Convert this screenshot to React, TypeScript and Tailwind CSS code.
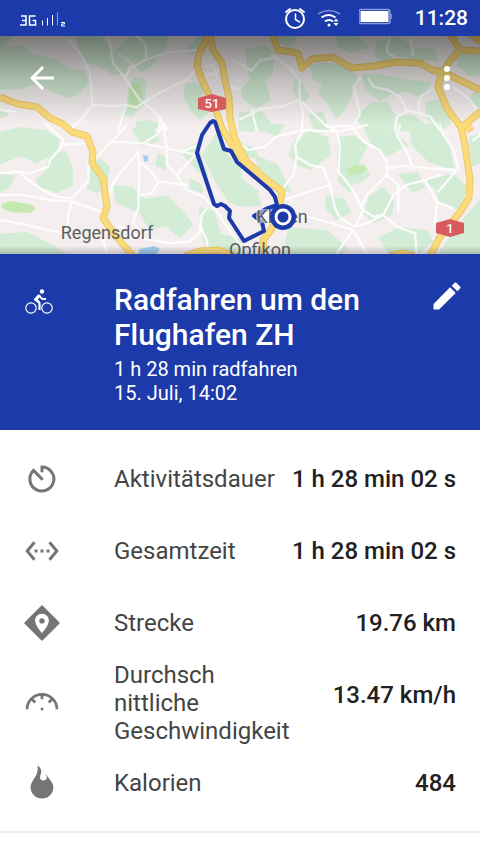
import type { ReactNode } from "react";

type Stat = {
    label: string;
    value: string;
    icon: ReactNode;
}

// the map is cut in four tiles, each 720 x 390 units drawn at a third of that size
type Tile = {
    place: string;
    woods: string;
    streets: string;
}

const tiles: Tile[] = [
    {
        place: "translate(0 0) scale(0.33333)",
        woods: "M0 145L70 140 90 165 165 180 200 205 250 215 265 245 235 280 205 290 150 268 100 250 60 264 0 265zM230 108L300 108 330 150 385 190 372 218 340 222 300 195 262 185 240 150zM400 108L500 108 495 140 450 200 425 212 385 170 350 150zM405 235L435 240 430 310 395 345 370 340 385 300 390 260zM560 255L610 250 600 300 620 340 600 355 575 330 555 290zM440 365L480 372 450 390 410 385 412 368zM0 330L20 345 0 350zM600 108L625 108 600 130 580 160 560 150zM0 108L30 108 10 140 0 140z",
        streets: "M205 118L245 165 270 220 278 315 245 355 210 390M278 315L340 318 378 315 410 322 450 295 500 268 560 240 590 205M378 315L355 390M325 108L340 190 375 235 420 300 480 350 500 390M375 235L390 205 440 178 500 158 590 150M440 178L435 130 410 108M620 225L655 215M615 200L640 195 650 230M700 185L720 190M0 330L45 335M480 350L478 390M690 260L720 270",
    },
    {
        place: "translate(240 0) scale(0.33333)",
        woods: "M20 150L75 140 100 160 95 220 70 240 90 300 50 320 15 300 5 270 35 240 25 200zM290 108L350 108 380 140 330 155 295 138zM410 130L470 110 520 145 580 150 590 180 540 175 470 165 430 185 410 165zM215 200L250 190 320 200 350 230 330 290 310 330 290 350 265 310 240 280 250 250 220 235zM370 225L430 230 490 240 570 250 540 290 500 270 450 280 420 300 380 265zM170 230L205 290 190 305 160 270zM0 340L60 335 90 370 70 390 0 390zM400 310L440 310 460 345 520 350 570 390 380 390 350 350zM655 165L720 165 720 220 690 225 655 195zM560 310L600 300 630 370 600 390 560 350zM700 280L720 270 720 320 690 300zM210 345L245 340 265 385 225 390zM110 108L170 108 150 140 130 130z",
        streets: "M0 190L35 212 60 180 100 175 95 165 150 205 178 240 180 300 130 318 60 328 0 358M180 300L190 345 185 390M180 300L220 340 260 380 290 390M260 380L340 378 360 340 350 300 340 260 360 235M385 235L400 260 445 270 480 290 500 330 540 340 570 350 600 390M535 335L540 290 590 260M450 108L440 155 470 175M510 108L520 165M500 335L470 350 465 390M640 260L690 300 720 345M35 330L50 390",
    },
    {
        place: "translate(0 125) scale(0.33333)",
        woods: "M0 25L60 10 140 20 175 45 170 75 110 110 60 90 0 115zM150 95L195 80 215 130 215 180 170 200 125 185 110 165 140 140zM280 115L300 105 325 125 320 185 290 200 265 190 268 150zM345 185L395 190 430 225 500 215 545 260 575 300 540 335 500 300 450 310 420 260 350 230zM0 330L80 325 150 360 190 385 0 385zM400 15L450 0 475 45 430 60zM545 80L590 60 620 150 600 140 570 110zM610 90L650 30 680 90 720 130 720 240 690 230 650 170zM475 90L500 100 495 130 470 120zM0 150L40 155 30 180 0 200zM570 165L600 180 605 200 575 190zM600 250L640 260 660 330 720 345 720 385 620 385z",
        streets: "M140 0L190 45 185 65 150 105 145 125 90 145 60 140 0 145M185 60L250 55M60 145L120 190 170 215 215 220 265 170 265 120M0 210L70 210 150 225 215 230 260 245 320 265M215 230L205 270 200 310M0 285L80 300 190 325M290 95L335 50 380 0M335 50L430 55 500 70 545 80 585 65M430 55L470 30 490 0 500 70 500 120 530 150 560 195 610 215 650 260 720 360M415 80L345 165 325 210M415 80L418 120 415 250 400 290 430 340 510 355 570 350 600 320 605 270 620 250M418 110L455 140 475 170 560 180M475 170L455 205 420 210M600 300L620 345 625 385M545 80L590 90M350 300L430 340M310 345L320 385M530 150L585 90",
    },
    {
        place: "translate(240 125) scale(0.33333)",
        woods: "M0 55L45 75 60 150 70 165 130 190 150 200 110 120 60 100 0 85zM165 50L210 20 260 40 270 90 210 130 180 120 150 90zM300 40L340 35 380 60 350 120 330 200 300 170 295 100zM70 0L130 0 110 30 75 15zM380 20L460 25 500 60 440 90 400 60zM510 0L580 0 620 50 640 130 570 110 520 60zM390 215L430 190 460 230 450 270 400 290 375 265zM560 170L640 150 680 190 650 250 600 230 590 190zM330 120L370 120 385 150 350 175zM480 150L530 145 550 185 520 200zM480 310L560 320 575 350 530 385 450 385 420 340zM150 310L260 320 320 370 300 385 130 385zM260 215L310 225 330 260 290 280 262 250zM650 310L720 230 720 385 600 385zM690 40L720 30 720 110 700 120zM0 160L50 200 60 240 0 240z",
        streets: "M0 55L25 75 75 65 110 35 190 15 290 20 340 10 380 0M190 15L165 60 170 95 160 150 125 195 115 230M170 95L210 120 250 130 270 180 285 250 300 280 345 305M115 230L190 205 270 180M260 0L290 20 300 60 295 140 335 190 370 255 345 305M340 10L370 50 420 75 440 110 440 150 380 210 360 250M480 0L470 30 500 80 520 130M440 130L490 122 570 130 650 135M600 0L610 30 640 70 655 130M555 165L500 180 460 210 430 270 380 295 345 305M440 150L475 180 475 260M370 255L400 275 430 270 470 305 525 325 530 385M555 165L590 230 640 250M590 230L585 300M160 265L260 290 340 315 380 385M340 315L290 385M600 150L555 165M595 200L650 135M700 45L720 30",
    },
]

const highways = [
    "M0 97L18 104 37 107 50 118 63 124 72 132 87 136 93 152 92 163 103 178 107 207 103 218 115 235 133 256",
    "M209 34L199 54 197 66 202 80 213 103 222 128 232 145 245 162 264 179 282 191",
    "M210 34L213 50 222 63 225 80 229 98 230 118 235 139 247 162 262 176 282 191 280 207 271 230 263 240 265 256",
    "M272 34L278 50 298 53 302 68 312 59 332 57 352 68 374 66 397 62 420 63 432 70 443 72 480 90",
    "M450 34L460 50 449 62 441 75 438 87 448 110 461 127 465 145 470 180 469 198 460 212 440 237 430 256",
    "M460 50L480 51",
    "M470 34L481 42",
    "M462 127L481 111",
    "M185 256L200 251 218 250 235 256",
    "M390 256L402 253 414 256",
    "M466 130L472 126",
]

const MapPicture = () => {
    return (
        <svg className="h-full w-full" viewBox="0 36 480 218" preserveAspectRatio="xMidYMid slice" role="img" aria-label="Karte der Strecke">
            <defs>
                <linearGradient id="shade" x1="0" y1="0" x2="0" y2="1">
                    <stop offset="0" stopColor="#000" stopOpacity="0.5" />
                    <stop offset="0.5" stopColor="#000" stopOpacity="0.2" />
                    <stop offset="1" stopColor="#000" stopOpacity="0" />
                </linearGradient>
                <linearGradient id="edge" x1="0" y1="0" x2="0" y2="1">
                    <stop offset="0" stopColor="#000" stopOpacity="0" />
                    <stop offset="1" stopColor="#000" stopOpacity="0.2" />
                </linearGradient>
            </defs>
            <rect y="36" width="480" height="218" fill="#f4eeee" />
            {tiles.map(tile => (
                <path key={tile.place} transform={tile.place} d={tile.woods} fill="#d3ecd5" stroke="#d3ecd5" strokeWidth="8" strokeLinejoin="round" />
            ))}
            <path d="M2 204l8-3 20 3 6 4-5 5-20-1-10-4zM128 105l4-22 8 2 4 20-14 5zM346 170l10-6 12 4-6 5-12 3z" fill="#c6e9b2" />
            <path d="M143 155l5 1 0 5-4 1zM140 249l14-3 6 3-4 5h-18z" fill="#a5cdf0" />
            {tiles.map(tile => (
                <path key={tile.place} transform={tile.place} d={tile.streets} fill="none" stroke="#fff" strokeOpacity="0.85" strokeWidth="7" strokeLinejoin="round" strokeLinecap="round" />
            ))}
            <g fill="none" strokeLinejoin="round">
                {highways.map(road => <path key={road} d={road} stroke="#efc766" strokeWidth="7" />)}
                {highways.map(road => <path key={road} d={road} stroke="#fbdc7c" strokeWidth="5" />)}
            </g>
            <rect y="36" width="480" height="88" fill="url(#shade)" />
            <g fill="#d65a5e">
                <path d="M198 98l14-4 14 4v11l-14 3-14-3z" />
                <path d="M436 223l14-4 14 4v10l-14 4-14-4z" />
            </g>
            <g fontFamily="Roboto, sans-serif" textAnchor="middle">
                <g fill="#fff" fontSize="13" fontWeight="500">
                    <text x="212" y="108">51</text>
                    <text x="450" y="233">1</text>
                </g>
                <path d="M213 121L210 123 202 135 197 153 214 204 217 206 221 204 225 206 230 211 229 218 244 241 264 231 262 222 254 216 266 209 277 205 275 197 270 190 237 162 231 151 224 149 215 122z" fill="none" stroke="#1c3aa9" strokeWidth="4" strokeLinejoin="round" />
                <path d="M256 209h15v14h-15z" fill="#fff" opacity="0.5" />
                <g fill="#5b5d60" fontSize="18">
                    <text x="107" y="239">Regensdorf</text>
                    <text x="282" y="223">Kloten</text>
                    <text x="260" y="256">Opfikon</text>
                </g>
            </g>
            <circle cx="283" cy="217" r="13" fill="#1c3aa9" />
            <circle cx="283" cy="217" r="7" fill="#1c3aa9" stroke="#fff" strokeWidth="3" />
            <rect y="246" width="480" height="8" fill="url(#edge)" />
        </svg>
    );
}

const StatusBar = () => {
    return (
        <div className="flex h-9 items-center bg-[#1c3aa9] pr-3 pl-5 text-white">
            <svg className="h-9 w-12" viewBox="20 0 48 36" fill="none" stroke="#fff" aria-label="3G">
                <path d="M21 16h5v9h-6M22 20.500h4M35.500 16h-6v9h6v-4.500h-3" strokeWidth="1.500" />
                <path d="M42.500 20.500v5M47.500 18v7.500M52.500 15v10.500" />
                <path d="M57.500 12.500v13" opacity="0.5" />
                <path d="M61 22.500h3.500v1.500h-3v2h3.500" />
            </svg>
            <div className="ml-auto flex items-center">
                <svg className="h-9 w-6" viewBox="282 0 24 36" fill="none" stroke="#fff" strokeWidth="2" strokeLinecap="round">
                    <circle cx="294" cy="19" r="9" />
                    <path d="M294.500 14v5.500l4 2.500" strokeWidth="1.500" />
                    <path d="M285 12l4-3M303 12l-4-3" />
                </svg>
                <svg className="ml-2 h-9 w-7" viewBox="314 0 28 36" fill="none" stroke="#fff" strokeWidth="2">
                    <path d="M317 14q11-7 22 0" strokeWidth="1.500" opacity="0.45" />
                    <path d="M320.500 17.500q7-5 14 0M324 21.500q4-3 8 0" />
                    <circle cx="328" cy="25" r="1.500" fill="#fff" stroke="none" />
                    <path d="M332.500 21.500l2.500-3 2.500 3zM332.500 23l2.500 3 2.500-3z" fill="#fff" stroke="none" />
                </svg>
                <svg className="ml-4 h-9 w-9" viewBox="359 0 36 36">
                    <rect x="359" y="9.500" width="31" height="14" rx="2" fill="none" stroke="#8d9cd4" strokeWidth="1.500" />
                    <path d="M391 14v5" stroke="#8d9cd4" strokeWidth="1.500" />
                    <rect x="360.500" y="11" width="28" height="11" fill="#fff" />
                </svg>
                <span className="ml-5 text-[21px] leading-9 font-medium">11:28</span>
            </div>
        </div>
    );
}

const stats: Stat[] = [
    {
        label: "Aktivitätsdauer",
        value: "1 h 28 min 02 s",
        icon: <path d="M12 7.500V4A8 8 0 1 1 6.300 6.300L12.500 12.500" fill="none" stroke="currentColor" strokeWidth="2" />,
    },
    {
        label: "Gesamtzeit",
        value: "1 h 28 min 02 s",
        icon: <path d="M7.770 6.760L6.230 5.480.820 12l5.410 6.520 1.540-1.280L3.420 12l4.350-5.240zM7 13h2v-2H7v2zm10-2h-2v2h2v-2zm-6 2h2v-2h-2v2zm6.770-7.520l-1.540 1.280L20.580 12l-4.350 5.240 1.540 1.280L23.180 12l-5.410-6.520z" />,
    },
    {
        label: "Strecke",
        value: "19.76 km",
        icon: (
            <>
                <path d="M12 1L23 12 12 23 1 12z" stroke="currentColor" strokeWidth="1.500" strokeLinejoin="round" />
                <path d="M12 5.800c-2.600 0-4.600 2-4.600 4.600 0 3.400 4.600 8.400 4.600 8.400s4.600-5 4.600-8.400c0-2.600-2-4.600-4.600-4.600z" fill="#fff" />
                <circle cx="12" cy="10.600" r="1.800" />
            </>
        ),
    },
    {
        label: "Durchsch\nnittliche Geschwindigkeit",
        value: "13.47 km/h",
        icon: (
            <>
                <path d="M2 16.200a10 10 0 0 1 20 0M12 6v3.500M5.500 9.700l2 2M18.500 9.700l-2 2" fill="none" stroke="currentColor" strokeWidth="1.800" />
                <circle cx="12" cy="16" r="1" />
            </>
        ),
    },
    {
        label: "Kalorien",
        value: "484",
        icon: <path d="M8.900.4C9.700 4.500 8.300 6.800 6.500 9.500 5.100 11.600 4.400 13 4.400 14.800a7.600 7.500 0 0 0 15.200 0C19.600 11.200 16 9.500 14.300 4.900c.2 1.500 1.200 2.700.9 3.900-.3 1-1.200 1.500-2.200 1.500-1.400 0-2.500-.9-2.300-2.300.1-1.400 1-2.600.8-4.100C11.300 2.400 10.300 1.200 8.900.4z" />,
    },
]

const StatRow = ({ label, value, icon }: Stat) => {
    return (
        <div className="flex text-2xl">
            <dt className="flex min-w-0 flex-1 items-center gap-[54px] text-[#444]">
                <svg className="size-9 shrink-0 text-[#757575]" viewBox="0 0 24 24" fill="currentColor" aria-hidden="true">{icon}</svg>
                <span className="min-h-[72px] min-w-0 flex-1 content-center py-0.5 leading-7 whitespace-pre-line">{label}</span>
            </dt>
            <dd className="shrink-0 pl-3 leading-[72px] font-medium text-[#212121]">{value}</dd>
        </div>
    );
}

const App = () => {
    return (
        <div className="min-h-screen bg-white font-[Roboto,sans-serif]">
            <StatusBar />
            <div className="relative h-[218px] overflow-hidden">
                <MapPicture />
                <div className="absolute inset-x-0 top-0 flex justify-between pt-6 pr-[15px] pl-6 text-white">
                    <button type="button" aria-label="Zurück">
                        <svg className="size-9" viewBox="0 0 24 24" fill="currentColor"><path d="M20 11H7.830l5.590-5.590L12 4l-8 8 8 8 1.410-1.410L7.830 13H20v-2z" /></svg>
                    </button>
                    <button type="button" aria-label="Mehr">
                        <svg className="size-9" viewBox="0 0 24 24" fill="currentColor">
                            <circle cx="12" cy="6" r="2" />
                            <circle cx="12" cy="12" r="2" />
                            <circle cx="12" cy="18" r="2" />
                        </svg>
                    </button>
                </div>
            </div>
            <header className="flex items-start bg-[#1c3aa9] pt-7 pr-[15px] pb-[25px] pl-6 text-white">
                <svg className="mr-[54px] size-9 shrink-0" viewBox="0 0 36 36" fill="none" stroke="currentColor" aria-hidden="true">
                    <circle cx="7" cy="26" r="5.200" strokeWidth="1.200" />
                    <circle cx="23" cy="26" r="5.200" strokeWidth="1.200" />
                    <circle cx="18" cy="9.500" r="2.200" fill="currentColor" stroke="none" />
                    <path d="M15 13L11 17.500 15.500 21V28" strokeWidth="2.200" strokeLinejoin="round" />
                    <path d="M14.500 13.500L18.500 17h3.500" strokeWidth="1.800" />
                    <path d="M16 13l-3.500 5 3 2" strokeWidth="2" />
                </svg>
                <div className="min-w-0 flex-1">
                    <h1 className="text-3xl leading-[35px] font-medium">Radfahren um den Flughafen ZH</h1>
                    <p className="mt-[5px] text-xl leading-6">1 h 28 min radfahren</p>
                    <p className="text-xl leading-6">15. Juli, 14:02</p>
                </div>
                <button type="button" className="-mt-1 shrink-0" aria-label="Bearbeiten">
                    <svg className="size-9" viewBox="0 0 24 24" fill="currentColor"><path d="M3 17.250V21h3.750L17.810 9.940l-3.750-3.750L3 17.250zM20.710 7.040c.39-.39.39-1.020 0-1.410l-2.340-2.340c-.39-.39-1.020-.39-1.410 0l-1.830 1.830 3.750 3.750 1.830-1.830z" /></svg>
                </button>
            </header>
            <dl className="border-b-2 border-[#ececec] px-6 pt-[13px] pb-3">
                {stats.map(stat => <StatRow key={stat.label} {...stat} />)}
            </dl>
        </div>
    );
}

export default App;
